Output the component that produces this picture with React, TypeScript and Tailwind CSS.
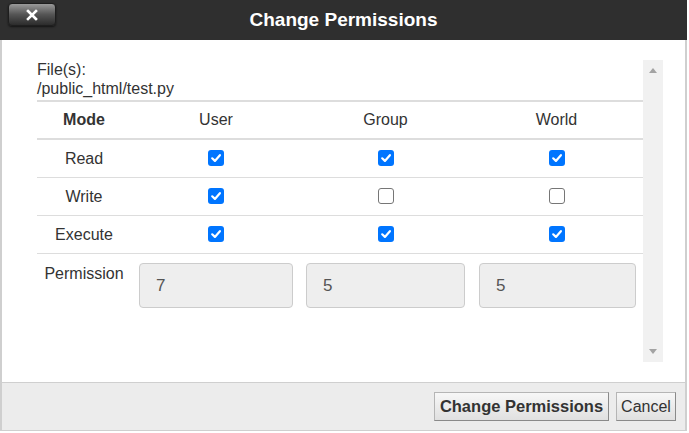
const font = { fontFamily: '"Liberation Sans", Arial, sans-serif' }

const Box = ({ on }: { on: boolean }) =>
  on ? (
    <span className="inline-flex h-[16px] w-[16px] items-center justify-center rounded-[3px] bg-[#0075ff]">
      <svg width="12" height="12" viewBox="0 0 12 12">
        <path d="M2.2 6.3 L4.9 8.9 L9.9 3.2" fill="none" stroke="#fff" strokeWidth="2.2" strokeLinecap="round" strokeLinejoin="round" />
      </svg>
    </span>
  ) : (
    <span className="inline-block h-[16px] w-[16px] rounded-[3px] border border-[#767676] bg-white" />
  )

const rows = [
  { name: "Read", v: [true, true, true] },
  { name: "Write", v: [true, false, false] },
  { name: "Execute", v: [true, true, true] },
]

const perms = [
  { n: "7", pad: "px-[8px]" },
  { n: "5", pad: "px-[5px]" },
  { n: "5", pad: "pl-[9px] pr-[7px]" },
]

const App = () => {
  return (
    <div className="h-[433px] w-[689px] bg-white" style={font}>
      <div className="flex h-[431px] w-[687px] flex-col border-x-2 border-b border-[#cfcfcf]">
        {/* title bar */}
        <div className="relative -mx-[2px] flex h-[40px] items-center justify-center bg-[#2f2f2f]">
          <button className="absolute left-[8px] top-[3px] flex h-[23px] w-[48px] items-center justify-center rounded-[4px] border border-[#1e1e1e] bg-gradient-to-b from-[#9a9a9a] via-[#555] to-[#2c2c2c] shadow-[0_1px_2px_rgba(0,0,0,0.6)]">
            <svg width="12" height="12" viewBox="0 0 12 12">
              <path d="M2 2 L10 10 M10 2 L2 10" stroke="#fff" strokeWidth="2.6" strokeLinecap="square" />
            </svg>
          </button>
          <span className="text-[19px] font-bold text-white">Change Permissions</span>
        </div>

        {/* body */}
        <div className="flex flex-1 bg-white pl-[35px] pr-[22px] pt-[20px]">
          <div className="flex h-[302px] flex-1">
            <div className="flex-1 text-[16px] text-[#333]">
              <div className="leading-[19px]">File(s):</div>
              <div className="leading-[19px]">/public_html/test.py</div>
              <div className="mt-[2px] border-t-2 border-[#ddd]">
                <div className="grid h-[38px] grid-cols-[94px_170px_169px_1fr] items-center border-b-2 border-[#ddd] text-center">
                  <span className="font-bold">Mode</span>
                  <span>User</span>
                  <span>Group</span>
                  <span>World</span>
                </div>
                {rows.map((r) => (
                  <div key={r.name} className="grid h-[38px] grid-cols-[94px_170px_169px_1fr] items-center border-b border-[#ddd] text-center">
                    <span>{r.name}</span>
                    {r.v.map((on, i) => (
                      <span key={i} className="flex justify-center pb-[2px]">
                        <Box on={on} />
                      </span>
                    ))}
                  </div>
                ))}
                <div className="grid grid-cols-[94px_170px_169px_1fr] pt-[9px] text-center">
                  <span className="pt-[1px] leading-[19px]">Permission</span>
                  {perms.map((p, i) => (
                    <div key={i} className={p.pad}>
                      <div className="flex h-[45px] items-center rounded-[4px] border border-[#ccc] bg-[#eee] pl-[16px] text-[17px] text-[#555]">
                        {p.n}
                      </div>
                    </div>
                  ))}
                </div>
              </div>
            </div>
            {/* scrollbar */}
            <div className="flex w-[20px] flex-col items-center justify-between bg-[#f1f1f1] py-[8px]">
              <svg width="8" height="5" viewBox="0 0 8 5">
                <path d="M0 5 L4 0 L8 5 Z" fill="#a3a3a3" />
              </svg>
              <svg width="8" height="5" viewBox="0 0 8 5">
                <path d="M0 0 L8 0 L4 5 Z" fill="#a3a3a3" />
              </svg>
            </div>
          </div>
        </div>

        {/* footer */}
        <div className="flex h-[48px] items-start justify-end gap-[7px] border-t border-[#cfcfcf] bg-[#ececec] pr-[9px] pt-[9px]">
          <button className="h-[29px] w-[175px] border border-[#b5b5b5] border-b-[#8a8a8a] border-r-[#8a8a8a] bg-gradient-to-b from-[#f7f7f7] to-[#e0e0e0] text-[16.5px] font-bold text-[#333]">
            Change Permissions
          </button>
          <button className="h-[29px] w-[60px] border border-[#b5b5b5] border-b-[#8a8a8a] border-r-[#8a8a8a] bg-gradient-to-b from-[#f7f7f7] to-[#e0e0e0] text-[16px] text-[#333]">
            Cancel
          </button>
        </div>
      </div>
    </div>
  )
}

export default App
